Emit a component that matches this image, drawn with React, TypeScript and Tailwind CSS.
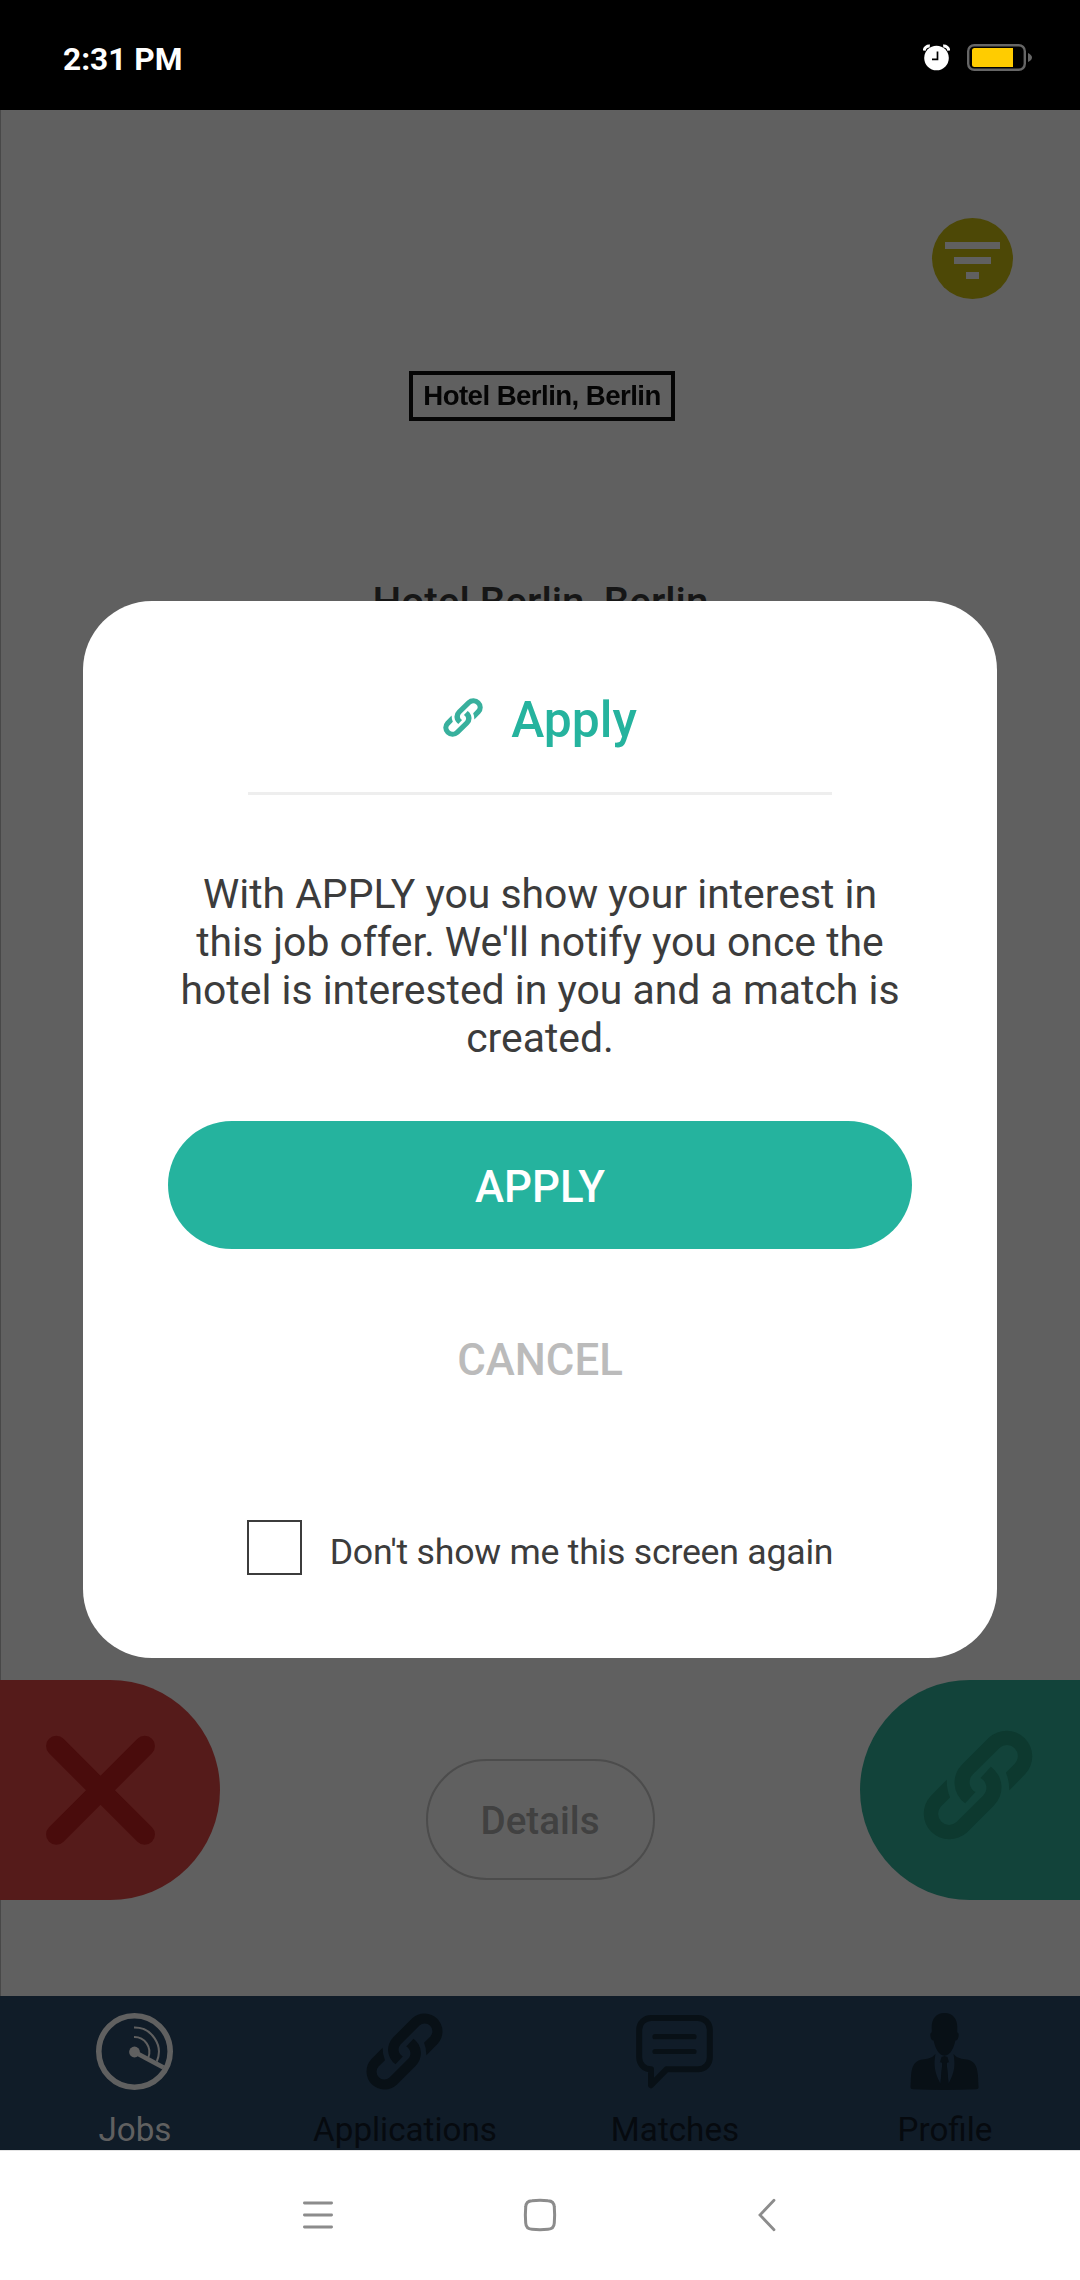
import React from "react";

function LinkIcon({ className }: { className: string }) {
  const half =
    "M377 430A77 77 0 0 1 368.6 312.6L448.6 232.6A77 77 0 0 1 557.4 341.4L509 391Q509 360 499 338L526.3 310.3A33 33 0 0 0 479.7 263.7L399.7 343.7A33 33 0 0 0 408 396Z";
  return (
    <svg viewBox="251 210 329 330" className={className} fill="currentColor" preserveAspectRatio="none">
      <path d={half} />
      <path d={half} transform="rotate(180 415.5 375)" />
    </svg>
  );
}

function RadarIcon() {
  return (
    <svg viewBox="0 0 77 77" className="size-[77px]" fill="none" stroke="currentColor">
      <circle cx="38.5" cy="38.5" r="35.7" strokeWidth="5.6" />
      <circle cx="38.5" cy="39" r="5.4" fill="currentColor" stroke="none" />
      <path d="M38.5 39L67.5 54.5" strokeWidth="4.8" />
      <path d="M38 14.6A24.3 24.3 0 0 1 60.8 48.5" strokeWidth="2" />
      <path d="M38 24A15 15 0 0 1 52.3 44.5" strokeWidth="2" />
    </svg>
  );
}

function ChatIcon() {
  return (
    <svg viewBox="0 0 77 77" className="size-[77px]" fill="none" stroke="currentColor" strokeLinecap="round" strokeLinejoin="round">
      <path
        d="M14.8 56.3A11.8 11.8 0 0 1 3.2 44.5V16.8A11.8 11.8 0 0 1 15 5H62A11.8 11.8 0 0 1 73.8 16.8V44.5A11.8 11.8 0 0 1 62 56.3H30.5L15 72.2V56.3Z"
        strokeWidth="6"
      />
      <path d="M19 23.7H58M19 38.5H58" strokeWidth="5.2" />
    </svg>
  );
}

function PersonIcon() {
  return (
    <svg viewBox="0 0 77 77" className="size-[77px]" fill="currentColor">
      <path d="M38.5 0C47 0 51.5 6 51.3 15L51.2 19.5C53.2 19.5 52.9 23 52 25.5Q51 28 49.4 27.5C47.8 35 44.5 42.5 38.5 42.7C32.5 42.5 29.2 35 27.6 27.5Q26 28 25 25.5C24.1 23 23.8 19.5 25.8 19.5L25.7 15C25.5 6 30 0 38.5 0Z" />
      <path d="M29.5 41C27 55 30 62 34.4 70.5L36.3 50.5L34.8 49L33.8 50L35.5 44L38.5 43L41.5 44L43.2 50L42.2 49L40.7 50.5L42.6 70.5C47 62 50 55 47.5 41C51 45 54 45.5 59 46.3C68.5 47.5 71 52 72 63L72.5 74Q73 76 70 76.3Q38.5 77.7 7 76.3Q4 76 4.5 74L5 63C6 52 8.5 47.5 18 46.3C23 45.5 26 45 29.5 41Z" />
      <path d="M36.5 49.5H40.5L42.5 72H34.5Z" />
    </svg>
  );
}

function StatusBar() {
  return (
    <header className="flex h-[110px] items-start justify-between bg-black pr-[48px] pl-[63px] text-white">
      <span className="mt-[40px] text-[31.7px] leading-[40px] font-bold">2:31 PM</span>
      <div className="mt-[44px] flex items-start gap-[17px]">
        <svg viewBox="0 0 27 27" className="size-[27px]">
          <circle cx="13.5" cy="14" r="12.3" fill="#fff" />
          <path d="M1.2 6.5A5 5 0 0 1 6.8 2" stroke="#fff" strokeWidth="3" fill="none" />
          <path d="M20.2 2A5 5 0 0 1 25.8 6.5" stroke="#fff" strokeWidth="3" fill="none" />
          <path d="M14.5 7.5V15.3H9" stroke="#000" strokeWidth="1.7" fill="none" />
        </svg>
        <svg viewBox="0 0 65 27" className="h-[27px] w-[65px]">
          <rect x="1.2" y="1.2" width="56.6" height="24.6" rx="6" fill="none" stroke="#666" strokeWidth="2.4" />
          <rect x="5" y="4" width="41" height="19" rx="2.5" fill="#ffcc00" />
          <path d="M42 4H46V23H42Z" fill="#ffcc00" />
          <path d="M61 9Q65 11 65 13.5Q65 16 61 18Z" fill="#666" />
        </svg>
      </div>
    </header>
  );
}

function JobCard() {
  return (
    <main className="flex h-[1886px] flex-col border-l border-[#484848] bg-[#606060]">
      <div className="flex justify-end pt-[108px] pr-[67px]">
        <button className="flex size-[81px] flex-col items-center gap-[8px] rounded-full bg-[#4d4806] pt-[24px]">
          <span className="h-[7px] w-[55px] bg-[#606060]" />
          <span className="h-[7px] w-[37px] bg-[#606060]" />
          <span className="h-[7px] w-[13px] bg-[#606060]" />
        </button>
      </div>
      <div className="mt-[72px] ml-[408px] flex h-[50px] w-[266px] items-center justify-center border-4 border-[#050505] font-['Liberation_Sans'] text-[27.6px] leading-[40px] font-bold tracking-[-0.55px] whitespace-nowrap text-[#050505] blur-[0.5px]">
        Hotel Berlin, Berlin
      </div>
      <h1 className="mt-[156px] text-center text-[40.5px] leading-[50px] font-medium text-[#161616]">Hotel Berlin, Berlin</h1>
      <div className="mt-auto mb-[96px] -ml-px flex h-[220px] items-start justify-between">
        <button className="flex h-[220px] w-[220px] items-center rounded-r-full bg-[#551b1a] pl-[46px]">
          <svg viewBox="0 0 110 110" className="size-[110px]" stroke="#490c0c" strokeWidth="20.5" strokeLinecap="round">
            <path d="M10.3 11L98.7 99.5M98.7 11L10.3 99.5" />
          </svg>
        </button>
        <button className="mt-[79px] h-[121px] w-[229px] rounded-full border-2 border-[#4c4c4c] text-[38.6px] font-medium text-[#414141]">
          <span className="block h-full leading-[119px]">Details</span>
        </button>
        <button className="flex h-[220px] w-[220px] items-start rounded-l-full bg-[#12433a] pt-[50px] pl-[63px] text-[#0d392f]">
          <LinkIcon className="size-[110px]" />
        </button>
      </div>
    </main>
  );
}

const tabs = [
  { label: "Jobs", icon: <RadarIcon />, tone: "text-[#606060]", labelTone: "text-[#606060]" },
  { label: "Applications", icon: <LinkIcon className="size-[77px]" />, tone: "text-[#081016]", labelTone: "text-[#060a0f]" },
  { label: "Matches", icon: <ChatIcon />, tone: "text-[#081016]", labelTone: "text-[#060a0f]" },
  { label: "Profile", icon: <PersonIcon />, tone: "text-[#081016]", labelTone: "text-[#060a0f]" },
];

function TabBar() {
  return (
    <nav className="grid h-[154px] grid-cols-4 bg-[#101c28]">
      {tabs.map((t) => (
        <div key={t.label} className={`flex flex-col items-center pt-[17px] pr-px ${t.tone}`}>
          {t.icon}
          <span className={`mt-[20px] pl-px text-[33.2px] leading-[40px] ${t.labelTone}`}>{t.label}</span>
        </div>
      ))}
    </nav>
  );
}

function SystemNav() {
  return (
    <footer className="flex h-[130px] items-start border-t border-[#e4e4e4] bg-white pt-[46px] pl-[301px]">
      <svg viewBox="0 0 34 36" className="h-[36px] w-[34px]" stroke="#8c8c8c" strokeWidth="2.8" strokeLinecap="round">
        <path d="M3.4 6H30.6M3.4 18H30.6M3.4 30H30.6" />
      </svg>
      <svg viewBox="0 0 36 36" className="ml-[187px] size-[36px]" fill="none" stroke="#8c8c8c" strokeWidth="3">
        <path d="M10 3.7Q18 3 26 3.7Q32 4 32.3 10Q33 18 32.3 26Q32 32 26 32.3Q18 33 10 32.3Q4 32 3.7 26Q3 18 3.7 10Q4 4 10 3.7Z" />
      </svg>
      <svg viewBox="0 0 24 36" className="ml-[197px] h-[36px] w-[24px]" fill="none" stroke="#8c8c8c" strokeWidth="2.8" strokeLinecap="round">
        <path d="M19 3.3L5 18L19 32.7" />
      </svg>
    </footer>
  );
}

function ApplyDialog() {
  return (
    <div className="absolute inset-0 flex items-start justify-center pt-[601px]">
      <section role="dialog" className="flex h-[1057px] w-[914px] flex-col items-center rounded-[69px] bg-white pt-[89px]">
        <div className="flex h-[60px] items-start text-[#25b39e]">
          <LinkIcon className="mt-[8px] mr-[28px] h-[39px] w-[40px] text-[#38b09d]" />
          <h2 className="text-[49.8px] leading-[60px] font-medium">Apply</h2>
        </div>
        <div className="mt-[42px] h-[3px] w-[584px] bg-[#eeeeee]" />
        <p className="mt-[75px] text-center text-[40.9px] leading-[48px] whitespace-nowrap text-[#3c3c3c]">
          With APPLY you show your interest in
          <br />
          this job offer. We'll notify you once the
          <br />
          hotel is interested in you and a match is
          <br />
          created.
        </p>
        <button className="mt-[59px] h-[128px] w-[744px] rounded-[64px] bg-[#25b39e] pt-[6px] text-[43.8px] font-medium text-white">APPLY</button>
        <button className="mt-[47px] h-[128px] w-[744px] pt-[2px] text-[43.8px] font-medium text-[#bbbbbb]">CANCEL</button>
        <label className="mt-[96px] flex h-[55px] items-start">
          <span className="size-[55px] border-2 border-[#3c3c3c]" />
          <span className="mt-[5px] ml-[28px] text-[35.7px] leading-[55px] tracking-[-0.25px] text-[#3c3c3c]">Don't show me this screen again</span>
        </label>
      </section>
    </div>
  );
}

export default function App() {
  return (
    <div className="relative h-[2280px] w-[1080px] overflow-hidden font-[Roboto,sans-serif]">
      <StatusBar />
      <JobCard />
      <TabBar />
      <SystemNav />
      <ApplyDialog />
    </div>
  );
}
